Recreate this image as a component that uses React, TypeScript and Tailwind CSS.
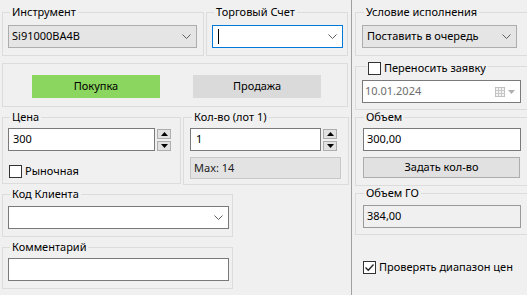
import React from "react";

const Chevron: React.FC = () => (
  <svg width="9" height="5" viewBox="0 0 9 5">
    <path d="M0.5 0.5 L4.5 4.5 L8.5 0.5" fill="none" stroke="#606060" strokeWidth="1" />
  </svg>
);

const Group: React.FC<{ label?: React.ReactNode; className?: string; children?: React.ReactNode }> = ({
  label,
  className,
  children,
}) => (
  <fieldset className={`border border-[#dcdcdc] ${className ?? ""}`}>
    {label && <legend className="ml-[2px] px-[2px] leading-[14px]">{label}</legend>}
    {children}
  </fieldset>
);

const Spinner: React.FC = () => (
  <div className="ml-[2px] flex w-[14px] flex-col">
    <div className="mt-[1px] flex h-[10px] items-center justify-center border border-[#adadad] bg-[#e1e1e1]">
      <svg width="7" height="4" viewBox="0 0 7 4">
        <path d="M0 4 L3.5 0 L7 4 Z" fill="#000" />
      </svg>
    </div>
    <div className="mt-[2px] flex h-[10px] items-center justify-center border border-[#adadad] bg-[#e1e1e1]">
      <svg width="7" height="4" viewBox="0 0 7 4">
        <path d="M0 0 L7 0 L3.5 4 Z" fill="#000" />
      </svg>
    </div>
  </div>
);

const CheckBox: React.FC<{ checked?: boolean }> = ({ checked }) => (
  <div className="flex h-[13px] w-[13px] shrink-0 items-center justify-center border border-[#333] bg-white">
    {checked && (
      <svg width="11" height="11" viewBox="0 0 11 11">
        <path d="M1.5 5.5 L4.3 8.3 L9.5 2.5" fill="none" stroke="#222" strokeWidth="1.3" />
      </svg>
    )}
  </div>
);

const App: React.FC = () => {
  return (
    <div className="flex h-[295px] w-[527px] overflow-hidden bg-[#f0f0f0] font-['Noto_Sans',sans-serif] text-[11px] text-black">
      {/* левая часть */}
      <div className="flex w-[351px] shrink-0 flex-col pl-[2px] pt-[5px]">
        <div className="flex">
          <Group label="Инструмент" className="h-[51px] w-[202px] pl-[5px]">
            <div className="mt-[6px] flex h-[23px] w-[189px] items-center justify-between border border-[#adadad] bg-[#e5e5e5] pl-[3px] pr-[5px]">
              <span>Si91000BA4B</span>
              <Chevron />
            </div>
          </Group>
          <Group label="Торговый Счет" className="ml-[2px] h-[51px] w-[142px] pl-[5px]">
            <div className="mt-[6px] flex h-[23px] w-[131px] items-center justify-between border border-[#0078d7] bg-white pl-[5px] pr-[5px]">
              <div className="h-[15px] w-px bg-black" />
              <Chevron />
            </div>
          </Group>
        </div>

        <Group className="mt-[7px] h-[44px] w-[346px]">
          <div className="flex pt-[11px]">
            <div className="ml-[29px] flex h-[23px] w-[128px] items-center justify-center bg-[#8bd65e]">Покупка</div>
            <div className="ml-[33px] flex h-[23px] w-[128px] items-center justify-center bg-[#dadada]">Продажа</div>
          </div>
        </Group>

        <div className="mt-[3px] flex">
          <Group label="Цена" className="h-[74px] w-[179px] pl-[5px]">
            <div className="mt-[4px] flex">
              <div className="flex h-[23px] w-[147px] items-center border border-[#7a7a7a] bg-white pl-[4px]">300</div>
              <Spinner />
            </div>
            <div className="ml-[1px] mt-[12px] flex items-center">
              <CheckBox />
              <span className="ml-[3px]">Рыночная</span>
            </div>
          </Group>
          <Group label="Кол-во (лот 1)" className="ml-[2px] h-[75px] w-[166px] pl-[6px]">
            <div className="mt-[4px] flex">
              <div className="flex h-[23px] w-[131px] items-center border border-[#7a7a7a] bg-white pl-[5px]">1</div>
              <Spinner />
            </div>
            <div className="mt-[6px] flex h-[22px] w-[151px] items-center border border-[#c8c8c8] bg-[#e3e3e3] pl-[3px] text-[#222]">
              Max: 14
            </div>
          </Group>
        </div>

        <Group label="Код Клиента" className="mt-[2px] h-[50px] w-[231px] pl-[5px]">
          <div className="mt-[5px] flex h-[23px] w-[221px] items-center justify-end border border-[#7a7a7a] bg-white pr-[5px]">
            <Chevron />
          </div>
        </Group>

        <Group label="Комментарий" className="mt-[3px] h-[49px] w-[231px] pl-[5px]">
          <div className="mt-[4px] h-[23px] w-[221px] border border-[#7a7a7a] bg-white" />
        </Group>
      </div>

      {/* разделитель */}
      <div className="w-px shrink-0 bg-[#a0a0a0]" />

      {/* правая часть */}
      <div className="flex shrink-0 flex-col pl-[3px] pt-[5px]">
        <Group label="Условие исполнения" className="h-[51px] w-[180px] pl-[6px]">
          <div className="mt-[6px] flex h-[23px] w-[155px] items-center justify-between border border-[#adadad] bg-[#e5e5e5] pl-[4px] pr-[5px]">
            <span>Поставить в очередь</span>
            <Chevron />
          </div>
        </Group>

        <fieldset className="mt-[1px] h-[53px] w-[180px] border border-[#dcdcdc] pl-[6px]">
          <legend className="ml-[5px] flex h-[18px] items-end pl-[1px] pr-[2px]">
            <CheckBox />
            <span className="ml-[3px] leading-[14px]">Переносить заявку</span>
          </legend>
          <div className="mt-[5px] flex h-[23px] w-[159px] items-center justify-between border border-[#7a7a7a] bg-white pl-[2px] pr-[5px] text-[#6d6d6d]">
            <span>10.01.2024</span>
            <div className="flex items-center">
              <svg width="10" height="10" viewBox="0 0 10 10">
                <rect x="0.5" y="0.5" width="9" height="9" fill="#f4f4f4" stroke="#c0c0c0" />
                <path d="M0.5 3.5 H9.5 M0.5 6.5 H9.5 M3.5 0.5 V9.5 M6.5 0.5 V9.5" stroke="#c8c8c8" />
              </svg>
              <svg className="ml-[3px]" width="7" height="4" viewBox="0 0 7 4">
                <path d="M0 0 L7 0 L3.5 4 Z" fill="#b0b0b0" />
              </svg>
            </div>
          </div>
        </fieldset>

        <Group label="Объем" className="h-[76px] w-[180px] pl-[6px]">
          <div className="ml-[1px] mt-[4px] flex h-[23px] w-[158px] items-center border border-[#7a7a7a] bg-white pl-[3px]">
            300,00
          </div>
          <div className="ml-[1px] mt-[6px] flex h-[21px] w-[157px] items-center justify-center border border-[#adadad] bg-[#e1e1e1]">
            Задать кол-во
          </div>
        </Group>

        <Group label="Объем ГО" className="h-[49px] w-[180px] pl-[6px]">
          <div className="ml-[1px] mt-[5px] flex h-[23px] w-[158px] items-center border border-[#9a9a9a] bg-[#f0f0f0] pl-[3px]">
            384,00
          </div>
        </Group>

        <div className="ml-[8px] mt-[24px] flex items-center">
          <CheckBox checked />
          <span className="ml-[3px]">Проверять диапазон цен</span>
        </div>
      </div>
    </div>
  );
};

export default App;
